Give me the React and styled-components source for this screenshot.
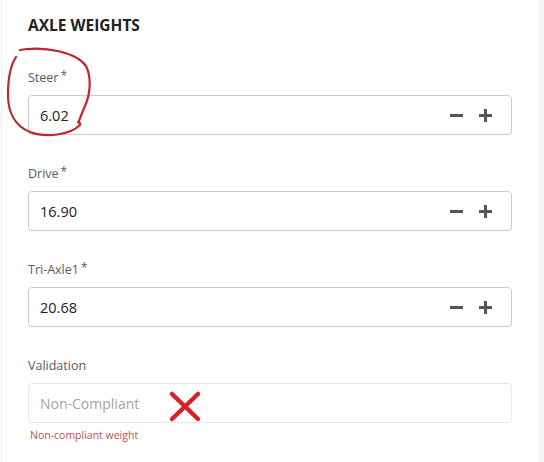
import React from "react";
import styled, { createGlobalStyle } from "styled-components";

const GlobalStyle = createGlobalStyle`
  html, body { margin: 0; padding: 0; background: #fff; }
  body { font-family: "Open Sans", "Noto Sans", sans-serif; }
`;

const Page = styled.div`
  position: relative;
  display: flex;
  width: 544px;
  height: 462px;
  overflow: hidden;
`;

const Panel = styled.section`
  flex: 1;
  margin-left: 1px;
  border-left: 1px solid #f0f0f0;
  padding: 15px 26px 0 26px;
`;

const SideStrip = styled.div`
  width: 6px;
  background: #f3f6f6;
`;

const Title = styled.h2`
  margin: 0 0 34px 0;
  font-size: 15.5px;
  line-height: 20px;
  font-weight: 700;
  color: #222;
`;

const Field = styled.div`
  margin-bottom: ${(p) => (p.$last ? "0" : "30px")};
`;

const Label = styled.label`
  display: block;
  height: 18px;
  font-size: 12.5px;
  line-height: 18px;
  color: #5a5a5a;
  margin-bottom: 8px;
`;

const Star = styled.span`
  position: relative;
  top: -2px;
  color: #6d4d73;
  margin-left: 2px;
  font-size: 12px;
`;

const Box = styled.div`
  display: flex;
  align-items: center;
  height: 40px;
  box-sizing: border-box;
  border: 1px solid ${(p) => (p.$muted ? "#e8e8e8" : "#c9c9c9")};
  border-radius: 4px;
  background: #fff;
  padding: 0 16px 0 11px;
`;

const Value = styled.input`
  flex: 1;
  border: none;
  outline: none;
  background: transparent;
  font-family: inherit;
  font-size: 14.5px;
  color: #222;
  padding: 0;
  &::placeholder { color: #a3a3a3; font-size: 14px; }
`;

const Stepper = styled.div`
  display: flex;
  align-items: center;
  gap: 9px;
`;

const StepButton = styled.button`
  width: 20px;
  height: 20px;
  padding: 0;
  border: none;
  background: none;
  display: flex;
  align-items: center;
  justify-content: center;
  color: #555;
  cursor: pointer;
`;

const ErrorText = styled.div`
  margin-top: 5px;
  margin-left: 2px;
  font-size: 10.5px;
  line-height: 14px;
  color: #c4504e;
`;

const Overlay = styled.svg`
  position: absolute;
  left: 0;
  top: 0;
  pointer-events: none;
`;

const MinusIcon = () => (
  <svg width="15" height="15" viewBox="0 0 15 15">
    <path d="M1 7.5h13" stroke="currentColor" strokeWidth="3" />
  </svg>
);

const PlusIcon = () => (
  <svg width="15" height="15" viewBox="0 0 15 15">
    <path d="M1 7.5h13M7.5 1v13" stroke="currentColor" strokeWidth="3" />
  </svg>
);

const axles = [
  { name: "Steer", value: "6.02" },
  { name: "Drive", value: "16.90" },
  { name: "Tri-Axle1", value: "20.68" },
];

export default function App() {
  return (
    <Page>
      <GlobalStyle />
      <Panel>
        <Title>AXLE WEIGHTS</Title>
        {axles.map((a) => (
          <Field key={a.name}>
            <Label>
              {a.name}
              <Star>*</Star>
            </Label>
            <Box>
              <Value defaultValue={a.value} />
              <Stepper>
                <StepButton aria-label="decrease"><MinusIcon /></StepButton>
                <StepButton aria-label="increase"><PlusIcon /></StepButton>
              </Stepper>
            </Box>
          </Field>
        ))}
        <Field $last>
          <Label>Validation</Label>
          <Box $muted>
            <Value placeholder="Non-Compliant" readOnly />
          </Box>
          <ErrorText>Non-compliant weight</ErrorText>
        </Field>
      </Panel>
      <SideStrip />
      <Overlay width="544" height="462" viewBox="0 0 544 462">
        <path
          d="M20 50 C45 46 76 52 86 66 C92 78 90 95 85 106 C82 113 80 118 79 121 C76 124 81 121 80 125 C70 135 46 138 30 132 C15 126 8 112 8 95 C8 78 10 66 16 57"
          fill="none"
          stroke="#c1262c"
          strokeWidth="2.2"
          strokeLinecap="round"
        />
        <path
          d="M172 394 L198 419 M198 394 L172 419"
          stroke="#d92029"
          strokeWidth="4.5"
          strokeLinecap="round"
        />
      </Overlay>
    </Page>
  );
}
